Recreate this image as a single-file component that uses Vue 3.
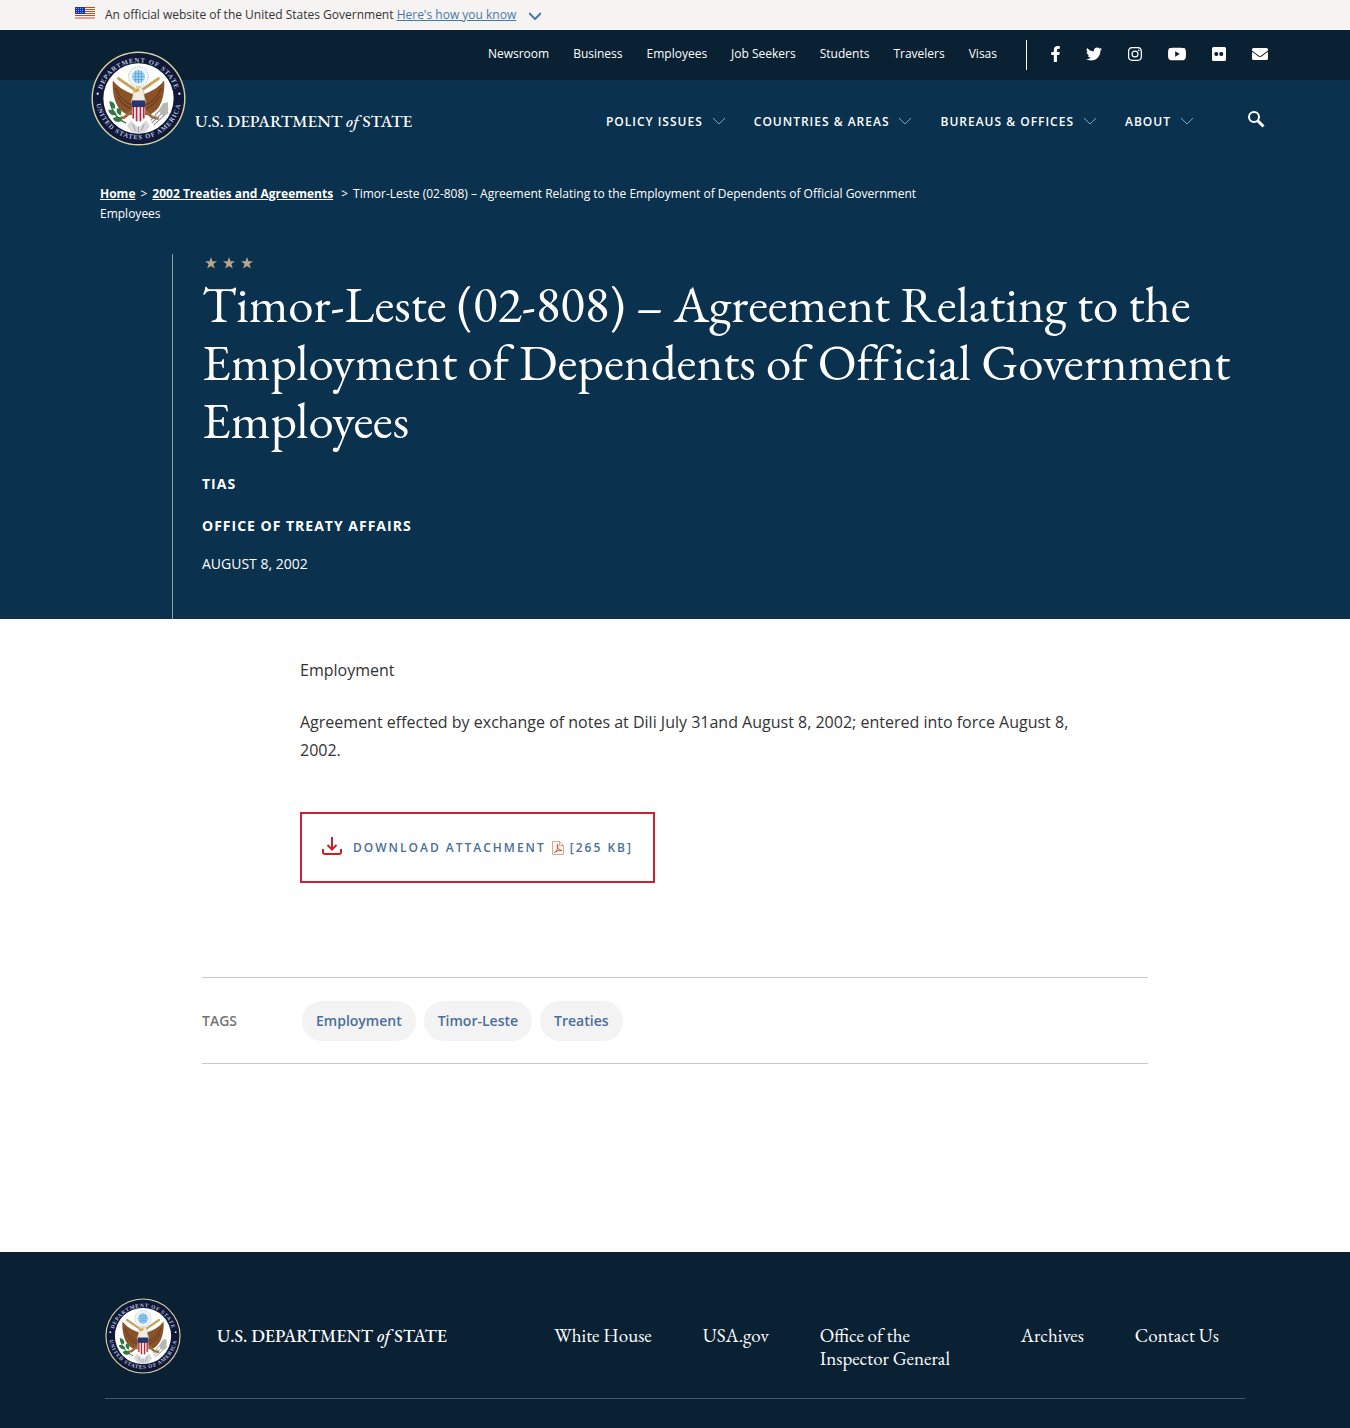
<script setup>
const utilityLinks = ['Newsroom', 'Business', 'Employees', 'Job Seekers', 'Students', 'Travelers', 'Visas']
const sections = ['Policy Issues', 'Countries & Areas', 'Bureaus & Offices', 'About']
const tags = ['Employment', 'Timor-Leste', 'Treaties']
const footerLinks = ['White House', 'USA.gov', 'Office of the Inspector General', 'Archives', 'Contact Us']

const social = [
  { name: 'Facebook', w: 9, box: '23 0 270 512', d: 'M279 288l14-93h-89v-60c0-25 12-50 52-50h41V7S260 0 225 0c-73 0-121 44-121 125v70H23v93h81v224h100V288z' },
  { name: 'Twitter', w: 16, box: '0 0 512 512', d: 'M459 152c.4 4.500.4 9 .4 13.600 0 138.700-105.600 298.600-298.600 298.600-59.500 0-114.700-17.200-161.100-47.100 8.400 1 16.600 1.300 25.300 1.300 49 0 94.200-16.600 130.300-44.800-46.100-1-84.800-31.200-98.100-72.800 6.500 1 13 1.600 19.800 1.600 9.400 0 18.800-1.300 27.600-3.600-48.100-9.700-84.100-52-84.100-103v-1.300c14 7.800 30.200 12.700 47.400 13.300-28.300-18.800-46.800-51-46.800-87.400 0-19.500 5.200-37.400 14.300-53 51.700 63.700 129.300 105.300 216.400 109.800-1.600-7.800-2.600-15.900-2.600-24 0-57.800 46.800-104.900 104.900-104.900 30.200 0 57.500 12.700 76.700 33.100 23.700-4.500 46.500-13.300 66.600-25.300-7.800 24.400-24.400 44.800-46.100 57.800 21.100-2.300 41.600-8.100 60.400-16.200-14.300 20.800-32.200 39.300-52.600 54.300z' },
  { name: 'Instagram', w: 14, box: '0 32 448 448', d: 'M224 141a115 115 0 1 0 0 230 115 115 0 0 0 0-230zm0 190a75 75 0 1 1 0-150 75 75 0 0 1 0 150zm146-194a27 27 0 1 1-54 0 27 27 0 0 1 54 0zm76 27c-2-36-10-68-36-94s-58-34-94-36c-37-2-148-2-185 0-36 2-68 10-94 36S3 128 1 164c-2 37-2 148 0 185 2 36 10 68 36 94s58 34 94 36c37 2 148 2 185 0 36-2 68-10 94-36s34-58 36-94c2-37 2-148 0-185zm-48 225a76 76 0 0 1-43 43c-29 12-99 9-132 9s-102 3-132-9a76 76 0 0 1-43-43c-11-29-9-99-9-132s-2-102 9-132a76 76 0 0 1 43-43c30-11 99-9 132-9s103-2 132 9a76 76 0 0 1 43 43c12 30 9 99 9 132s3 103-9 132z' },
  { name: 'YouTube', w: 18, box: '14 64 548 384', d: 'M550 124c-7-24-25-42-49-49-42-11-213-11-213-11S117 64 75 75c-24 7-42 25-49 49-11 43-11 132-11 132s0 90 11 133c7 23 25 41 49 47 42 12 213 12 213 12s171 0 213-12c24-6 42-24 49-47 11-43 11-133 11-133s0-89-11-132zM232 338V175l143 81z' },
  { name: 'Flickr', w: 14, box: '0 32 448 448', d: 'M400 32H48A48 48 0 0 0 0 80v352a48 48 0 0 0 48 48h352a48 48 0 0 0 48-48V80a48 48 0 0 0-48-48zM145 319a64 64 0 1 1 0-127 64 64 0 0 1 0 127zm159 0a64 64 0 1 1 0-127 64 64 0 0 1 0 127z' },
  { name: 'Email', w: 16, box: '0 64 512 384', d: 'M502 191c4-3 10 0 10 5v204a48 48 0 0 1-48 48H48a48 48 0 0 1-48-48V196c0-5 6-8 10-5 22 17 52 39 154 114 21 15 57 47 92 47 35 0 72-32 92-47 103-75 132-97 154-114zM256 320c23 0 57-29 73-41 133-96 143-105 173-128 6-5 10-12 10-19v-20a48 48 0 0 0-48-48H48A48 48 0 0 0 0 112v20c0 7 4 14 10 19 30 23 40 32 173 128 17 12 50 41 73 41z' }
]
</script>

<template>
  <div class="page">
    <svg class="defs" width="0" height="0" aria-hidden="true">
      <defs>
        <path id="arc-top" d="M10 52a40 40 0 0 1 80 0" />
        <path id="arc-bottom" d="M5 48a45 45 0 0 0 90 0" />
        <symbol id="seal" viewBox="0 0 100 100">
          <circle cx="50" cy="50" r="49.500" fill="#d9d3a0" />
          <circle cx="50" cy="50" r="48" fill="#10183a" />
          <circle cx="50" cy="50" r="37" fill="#fff" />
          <g class="seal-text" fill="#b9c3d8" text-anchor="middle">
            <text><textPath href="#arc-top" startOffset="50%">DEPARTMENT OF STATE</textPath></text>
            <text><textPath href="#arc-bottom" startOffset="50%">UNITED STATES OF AMERICA</textPath></text>
          </g>
          <circle cx="7" cy="45" r="1.200" fill="#e8ecf4" />
          <circle cx="93" cy="45" r="1.200" fill="#e8ecf4" />
          <circle cx="50" cy="27" r="10.500" fill="#f3f6f8" stroke="#b4bcbe" stroke-width="1" stroke-dasharray="1.500 1" />
          <circle cx="50" cy="27" r="7" fill="#a9d6ee" />
          <path d="M45 24h10M44 27h12M45 30h10M47 21v12M50 20v14M53 21v12" stroke="#5aa9d8" stroke-width="1" />
          <path d="M29 29l16 11M71 29L55 40" stroke="#c3a45a" stroke-width="3" stroke-linecap="round" />
          <path d="M46 46c-7-3-15-5-23-15-1 12 2 26 9 32 4 4 9 5 13 4zM54 46c7-3 15-5 23-15 1 12-2 26-9 32-4 4-9 5-13 4z" fill="#8a5228" />
          <path d="M26 39c3 8 8 14 17 18M28 48c4 7 9 11 16 13M74 39c-3 8-8 14-17 18M72 48c-4 7-9 11-16 13" fill="none" stroke="#5c3317" stroke-width="1" />
          <path d="M44 47c0-6 2-9 6-9 4 0 6 3 6 9l2 7H42z" fill="#f1ece0" stroke="#a5946f" stroke-width=".5" />
          <path d="M50 39l-5 2 1 3 5-2z" fill="#d5a437" />
          <path d="M42 73l8 8 8-8 4 6-5 7H43l-5-7z" fill="#d9d9dc" />
          <path d="M44 77l3 7M50 79v7M56 77l-3 7" stroke="#8f8f96" stroke-width=".8" />
          <path d="M42 64l-7 6-5 1M58 64l7 6 5 1" fill="none" stroke="#9a6a32" stroke-width="3" stroke-linecap="round" />
          <path d="M43 52h14v16c0 4-4 6-7 8-3-2-7-4-7-8z" fill="#f4f0f2" />
          <path d="M44.500 58v13M48 58v16M52 58v16M55.500 58v13" stroke="#b8283c" stroke-width="1.700" />
          <path d="M43 52h14v7H43z" fill="#27356f" />
          <path d="M20 53c2 12 8 19 17 23" fill="none" stroke="#3d6b36" stroke-width="1.200" />
          <path d="M20 53c5 1 6 4 5 8-4-1-6-4-5-8zM18 62c5-1 8 1 9 5-4 2-8-1-9-5zM23 71c4-3 8-2 10 2-3 3-8 2-10-2zM28 60c4 1 5 4 3 8-4-2-5-5-3-8z" fill="#2f7a41" />
          <path d="M64 76l17-17M63 73l15-17M66 78l15-14" stroke="#8d928b" stroke-width="1.200" />
          <path d="M76 55l5-1v12l-6 2-4-5z" fill="#b4b8b1" />
        </symbol>
        <symbol id="chevron" viewBox="0 0 14 8">
          <path d="M1 1l6 6 6-6" fill="none" stroke="currentColor" />
        </symbol>
      </defs>
    </svg>

    <div class="gov-banner">
      <svg class="flag" width="20" height="12" viewBox="0 0 20 12" aria-hidden="true">
        <path fill="#fff" d="M0 0h20v12H0z" />
        <path d="M0 .5h20M0 2.500h20M0 4.500h20M0 6.500h20M0 8.500h20M0 11h20" stroke="#db3e1f" />
        <path fill="#1e33b1" d="M0 0h10v7H0z" />
        <path d="M1 1.500h8M1 3.500h8M1 5.500h8" stroke="#8791dc" stroke-dasharray="1 1" />
      </svg>
      <span>An official website of the United States Government <a href="#">Here's how you know</a></span>
      <svg class="banner-arrow" width="12" height="8" viewBox="0 0 12 8" aria-hidden="true">
        <path d="M0 1l6 6 6-6" fill="none" stroke="#4a77a8" stroke-width="2" />
      </svg>
    </div>

    <header class="site-header">
      <div class="utility">
        <nav class="utility-links" aria-label="Audience">
          <a v-for="link in utilityLinks" :key="link" href="#">{{ link }}</a>
        </nav>
        <div class="social">
          <a v-for="s in social" :key="s.name" href="#" :aria-label="s.name">
            <svg :width="s.w" height="16" :viewBox="s.box"><path :d="s.d" fill="#fff" /></svg>
          </a>
        </div>
      </div>
      <div class="main-bar">
        <a class="brand" href="#">
          <svg class="brand-seal" viewBox="0 0 100 100" aria-hidden="true"><use href="#seal" /></svg>
          <span>U.S. DEPARTMENT <i>of</i> STATE</span>
        </a>
        <nav class="sections" aria-label="Main">
          <button v-for="s in sections" :key="s" type="button">
            {{ s }}
            <svg width="14" height="8" aria-hidden="true"><use href="#chevron" /></svg>
          </button>
        </nav>
        <button class="search" type="button" aria-label="Search">
          <svg width="18" height="18" viewBox="0 0 18 18">
            <circle cx="7" cy="7" r="5" fill="none" stroke="#fff" stroke-width="2" />
            <path d="M10.500 10.500l6 6" stroke="#fff" stroke-width="3" />
          </svg>
        </button>
      </div>
    </header>

    <section class="hero">
      <nav class="crumbs" aria-label="Breadcrumb">
        <a href="#">Home</a><span class="sep">&gt;</span><a href="#">2002 Treaties and Agreements</a><span class="sep last">&gt;</span>Timor-Leste (02-808) – Agreement Relating to the Employment of Dependents of Official Government Employees
      </nav>
      <div class="hero-body">
        <svg class="stars" width="52" height="12" viewBox="0 0 52 12" aria-hidden="true">
          <path v-for="n in 3" :key="n" :transform="`translate(${(n - 1) * 18} 0)`" d="M6 0l1.500 4.300H12L8.400 7l1.400 4.600L6 8.900l-3.800 2.700L3.600 7 0 4.300h4.500z" fill="#b9a488" />
        </svg>
        <h1>Timor-Leste (02-808) – Agreement Relating to the Employment of Dependents of Official Government Employees</h1>
        <p class="kind">TIAS</p>
        <p class="office"><a href="#">Office of Treaty Affairs</a></p>
        <p class="date">August 8, 2002</p>
      </div>
    </section>

    <main>
      <article>
        <p>Employment</p>
        <p>Agreement effected by exchange of notes at Dili July 31and August 8, 2002; entered into force August 8, 2002.</p>
        <a class="download" href="#">
          <svg class="download-icon" width="20" height="18" viewBox="0 0 20 18" aria-hidden="true">
            <path d="M10 0v12M5.500 8l4.500 4.500L14.500 8M1 12v3q0 2 2 2h14q2 0 2-2v-3" fill="none" stroke="#cd2026" stroke-width="2" />
          </svg>
          <span>Download Attachment</span>
          <svg class="pdf" width="12" height="14" viewBox="0 0 12 14" aria-hidden="true">
            <path d="M.5.5h7l4 4v9H.5z" fill="#fff7f2" stroke="#e0a08c" />
            <path d="M7.500.5v4h4" fill="none" stroke="#e0a08c" />
            <path d="M2.500 11.500c3-2 4-6 3-8-1 2 1 6 4.500 6-3-1-6 1-7.500 2z" fill="none" stroke="#d0483a" />
          </svg>
          <span>[265 KB]</span>
        </a>
      </article>

      <section class="tags">
        <h2>TAGS</h2>
        <ul>
          <li v-for="tag in tags" :key="tag"><a href="#">{{ tag }}</a></li>
        </ul>
      </section>
    </main>

    <footer>
      <div class="footer-inner">
        <svg class="footer-seal" viewBox="0 0 100 100" aria-hidden="true"><use href="#seal" /></svg>
        <a class="footer-name" href="#">U.S. DEPARTMENT <i>of</i> STATE</a>
        <nav class="footer-links" aria-label="Footer">
          <a v-for="link in footerLinks" :key="link" href="#">{{ link }}</a>
        </nav>
      </div>
    </footer>
  </div>
</template>

<style>
body {
  margin: 0;
  background: #fff;
}
</style>

<style scoped>
.page {
  font-family: 'Open Sans', sans-serif;
  font-size: 12px;
  color: #333;
}
.page * {
  box-sizing: border-box;
}
a {
  color: inherit;
  text-decoration: none;
}
button {
  padding: 0;
  border: 0;
  background: none;
  color: inherit;
  font: inherit;
  cursor: pointer;
}
p, h1, h2, ul {
  margin: 0;
  padding: 0;
}
svg {
  display: block;
  flex: none;
}
.defs {
  position: absolute;
}
.seal-text {
  font: bold 7px 'Liberation Serif', serif;
  letter-spacing: 1px;
}

.gov-banner {
  display: flex;
  align-items: center;
  height: 30px;
  padding: 0 75px 2px;
  background: #f5f4f3;
}
.gov-banner a {
  color: #4a77a8;
  text-decoration: underline;
}
.flag {
  margin: 0 10px 2px 0;
}
.banner-arrow {
  margin: 4px 0 0 13px;
}

.site-header {
  background: #0a314d;
  color: #fff;
}
.utility {
  display: flex;
  justify-content: flex-end;
  align-items: center;
  height: 50px;
  padding: 0 82px;
  background: #0a2033;
}
.utility-links {
  display: flex;
  gap: 24px;
  margin-right: 29px;
  padding-bottom: 4px;
}
.social {
  display: flex;
  align-items: center;
  gap: 26px;
  height: 30px;
  padding: 0 0 2px 24px;
  border-left: 1px solid #fff;
}
.main-bar {
  display: flex;
  align-items: center;
  height: 82px;
  padding: 0 85px 0 195px;
}
.brand {
  position: relative;
  margin-right: auto;
  font-family: 'EB Garamond', 'Liberation Serif', serif;
  font-size: 17px;
  font-weight: 500;
}
.brand-seal {
  position: absolute;
  top: 50%;
  right: 100%;
  width: 95px;
  height: 95px;
  margin: -70px 9px 0 0;
}
.sections {
  display: flex;
  gap: 28px;
  margin-right: 53px;
}
.sections button {
  display: flex;
  align-items: center;
  gap: 9px;
  font-size: 12px;
  font-weight: 600;
  letter-spacing: 1px;
  text-transform: uppercase;
}
.sections svg {
  color: #7fa3c4;
}
.search {
  padding-bottom: 4px;
}

.hero {
  padding: 22px 100px 0;
  background: #0a314d;
  color: #fff;
}
.crumbs {
  max-width: 860px;
  line-height: 20px;
}
.crumbs a {
  font-weight: 700;
  text-decoration: underline;
}
.sep {
  margin: 0 5px;
}
.sep.last {
  margin-left: 8px;
}
.hero-body {
  margin: 30px 0 0 72px;
  padding: 3px 0 45px 29px;
  border-left: 1px solid #8d9a9c;
}
.stars {
  margin: 0 0 6px 3px;
}
h1 {
  font-family: 'EB Garamond', 'Liberation Serif', serif;
  font-size: 51px;
  font-weight: 400;
  font-variant-ligatures: none;
  line-height: 58px;
}
.kind,
.office,
.date {
  font-size: 14px;
  line-height: 20px;
  text-transform: uppercase;
}
.kind,
.office {
  font-weight: 700;
  letter-spacing: 1px;
}
.kind {
  margin: 25px 0 22px;
}
.date {
  margin-top: 18px;
}

main {
  padding: 37px 0 188px;
}
article {
  max-width: 946px;
  margin: 0 auto;
  padding: 0 72px 0 98px;
  font-size: 16px;
  line-height: 28px;
}
article p {
  margin-bottom: 24px;
}
.download {
  display: inline-flex;
  align-items: center;
  height: 71px;
  margin-top: 24px;
  padding: 0 20px;
  border: 2px solid #cd1f35;
  color: #4a6f9c;
  font-size: 12px;
  font-weight: 600;
  letter-spacing: 2px;
  text-transform: uppercase;
}
.download-icon {
  margin: 0 11px 4px 0;
}
.pdf {
  margin: 0 6px;
}
.tags {
  display: flex;
  align-items: center;
  max-width: 946px;
  height: 87px;
  margin: 94px auto 0;
  border: solid #c8c8c8;
  border-width: 1px 0;
}
.tags h2 {
  width: 100px;
  color: #757575;
  font-size: 14px;
  font-weight: 600;
}
.tags ul {
  display: flex;
  gap: 8px;
  list-style: none;
}
.tags a {
  display: block;
  padding: 0 14px;
  border-radius: 20px;
  background: #f4f3f3;
  color: #4a6f9c;
  font-size: 14px;
  font-weight: 600;
  line-height: 40px;
}

footer {
  padding: 46px 105px 29px;
  background: #0a2033;
  color: #fff;
  font-family: 'EB Garamond', 'Liberation Serif', serif;
}
.footer-inner {
  display: flex;
  align-items: flex-start;
  max-width: 1140px;
  margin: 0 auto;
  padding-bottom: 24px;
  border-bottom: 1px solid #44586a;
}
.footer-seal {
  width: 76px;
  height: 76px;
  margin-right: 36px;
}
.footer-name {
  margin: 26px auto 0 0;
  font-size: 18px;
  font-weight: 500;
  line-height: 24px;
}
.footer-links {
  display: flex;
  gap: 51px;
  margin: 26px 26px 0 0;
  font-size: 19px;
  line-height: 23px;
}
.footer-links a {
  max-width: 150px;
}
</style>
